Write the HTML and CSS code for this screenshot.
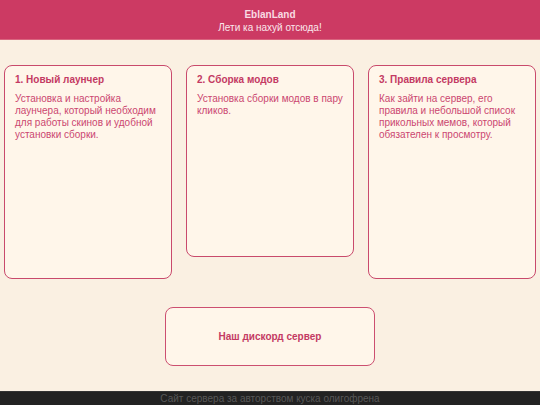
FILE: index.html
```html
<!DOCTYPE html>
<html lang="ru">
<head>
<meta charset="utf-8">
<title>EblanLand</title>
<link rel="stylesheet" href="styles.css">
</head>
<body>
<header class="header">
  <div class="brand">EblanLand</div>
  <div class="tagline">Лети ка нахуй отсюда!</div>
</header>
<main class="main">
  <section class="cards">
    <div class="card card-tall">
      <h2 class="card-title">1. Новый лаунчер</h2>
      <p class="card-text">Установка и настройка лаунчера, который необходим для работы скинов и удобной установки сборки.</p>
    </div>
    <div class="card card-short">
      <h2 class="card-title">2. Сборка модов</h2>
      <p class="card-text">Установка сборки модов в пару кликов.</p>
    </div>
    <div class="card card-tall">
      <h2 class="card-title">3. Правила сервера</h2>
      <p class="card-text">Как зайти на сервер, его правила и небольшой список прикольных мемов, который обязателен к просмотру.</p>
    </div>
  </section>
  <div class="discord-wrap">
    <div class="discord">Наш дискорд сервер</div>
  </div>
</main>
<footer class="footer">Сайт сервера за авторством куска олигофрена</footer>
</body>
</html>
```
FILE: styles.css
```css
* { box-sizing: border-box; }
html, body { margin: 0; padding: 0; }
body {
  width: 540px;
  height: 405px;
  background: #faf0e2;
  font-family: "Liberation Sans", Arial, sans-serif;
  font-size: 10px;
  display: flex;
  flex-direction: column;
  overflow: hidden;
}
.header {
  height: 40px;
  background: #cc3a63;
  border-bottom: 1px solid #d9657f;
  text-align: center;
  padding-top: 9px;
  line-height: 12px;
}
.brand {
  font-weight: bold;
  color: #f9dbe3;
  font-size: 10px;
}
.tagline {
  color: #fbe7ec;
  font-size: 10px;
  margin-top: 1px;
}
.main {
  flex: 1;
  padding: 25px 4px 0;
}
.cards {
  display: flex;
  gap: 14px;
  align-items: flex-start;
}
.card {
  width: 168px;
  background: #fff6ea;
  border: 1.5px solid #c94a6c;
  border-radius: 8px;
  padding: 8px 10px;
  color: #c9406a;
}
.card-tall { height: 214px; }
.card-short { height: 192px; }
.card-title {
  margin: 0;
  font-size: 10px;
  line-height: 12px;
  font-weight: bold;
  color: #c43a63;
}
.card-text {
  margin: 7px 0 0;
  font-size: 10px;
  line-height: 12px;
  color: #cb4670;
}
.discord-wrap {
  display: flex;
  justify-content: center;
  padding-top: 28px;
}
.discord {
  width: 210px;
  height: 59px;
  background: #fff6ea;
  border: 1.5px solid #cc4f70;
  border-radius: 8px;
  display: flex;
  align-items: center;
  justify-content: center;
  font-weight: bold;
  color: #c43a63;
  font-size: 10px;
}
.footer {
  height: 14px;
  background: #222222;
  border-top: 1px solid #333;
  color: #585858;
  text-align: center;
  font-size: 10px;
  line-height: 13px;
}
```
